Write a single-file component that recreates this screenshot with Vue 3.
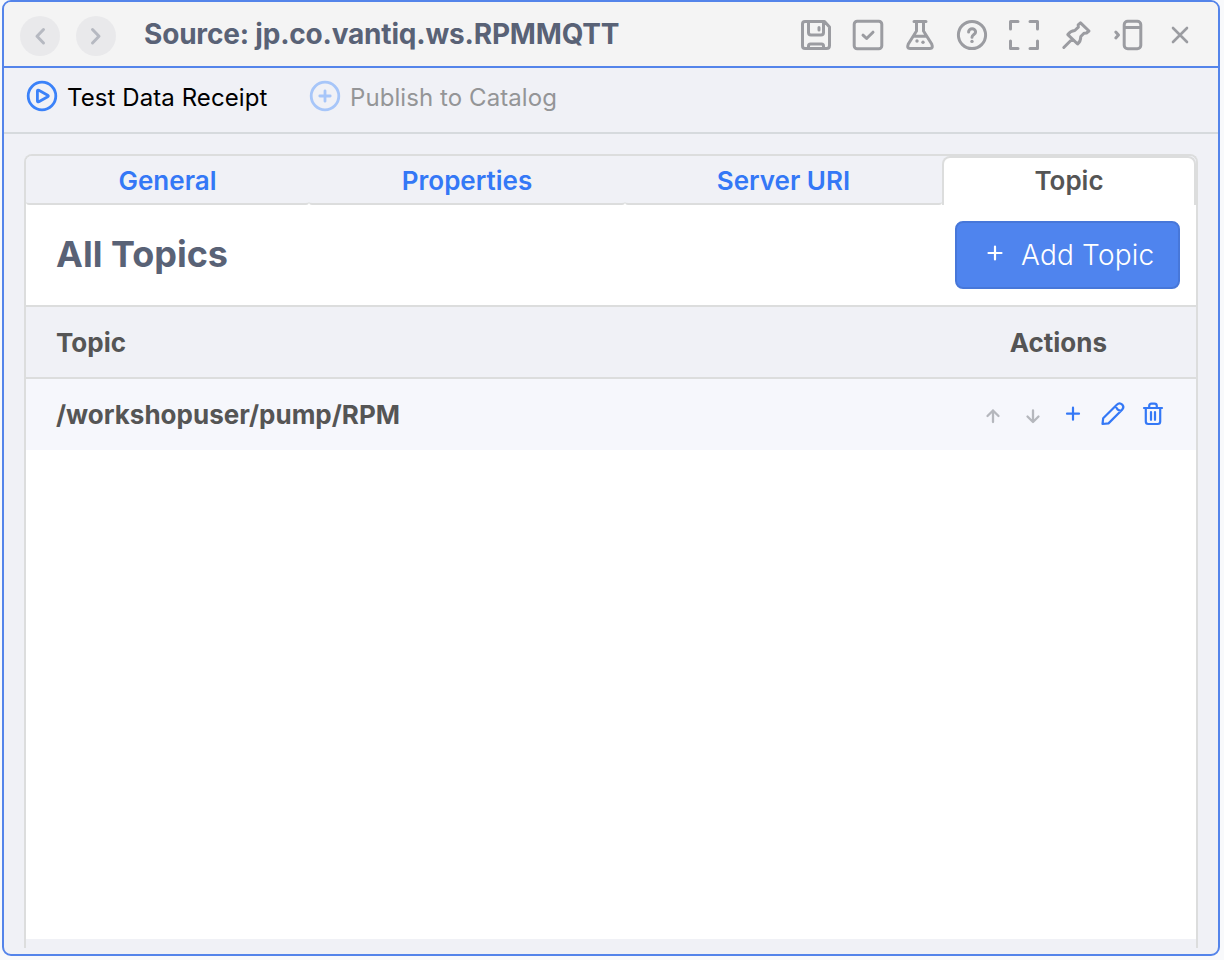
<script setup>
const tabs = [
  { name: 'General', cls: 'general' },
  { name: 'Properties', cls: 'properties' },
  { name: 'Server URI', cls: 'server' },
  { name: 'Topic', cls: 'active' },
]
const topics = ['/workshopuser/pump/RPM']
</script>

<template>
  <div class="window">
    <header class="titlebar">
      <button class="nav"><svg width="40" height="40" viewBox="0 0 40 40"><path d="M23.5 13.5 L17 20.2 L23.5 27" /></svg></button>
      <button class="nav"><svg width="40" height="40" viewBox="0 0 40 40"><path d="M16.5 13.5 L23 20.2 L16.5 27" /></svg></button>
      <h1><span>Source: jp.co.vantiq.ws.RPMMQTT</span></h1>
      <div class="tools">
        <svg viewBox="0 0 32 32"><path d="M5 2.5H24.5L29.5 8V26.5Q29.5 29.5 26.5 29.5H5Q2.5 29.5 2.5 27V5Q2.5 2.5 5 2.5Z M8.5 3V13.5Q8.5 16 11 16H21Q23.5 16 23.5 13.5V3 M8.5 29V27Q8.5 25 10.5 25H21.5Q23.5 25 23.5 27V29 M19 8.5V11" /></svg>
        <svg viewBox="0 0 32 32"><rect x="2.2" y="2.2" width="27.6" height="27.6" rx="3" /><path d="M11 16.2L14.6 19.5L21 13.2" /></svg>
        <svg viewBox="0 0 32 32"><path d="M10 2.5H22 M12.5 3V12L4.3 25Q2.5 29.5 6 29.5H26Q29.5 29.5 27.7 25L19.5 12V3 M9.5 17.3H22.5" /><circle class="dot" cx="13" cy="22" r="1.7" /><circle class="dot" cx="19" cy="23.2" r="1.7" /></svg>
        <svg viewBox="0 0 32 32"><circle cx="16" cy="16" r="13.6" /><path d="M12.6 13C12.6 8.8 19.6 8.8 19.6 13C19.6 15.5 16 15.5 16 18.2" /><circle class="dot" cx="16" cy="22.4" r="1.7" /></svg>
        <svg viewBox="0 0 32 32"><path d="M2.5 10V2.5H10 M22 2.5H29.5V10 M29.5 22V29.5H22 M10 29.5H2.5V22" /></svg>
        <svg viewBox="0 0 32 32"><path d="M20.5 3.8L29 12L26.5 14L24 14.2L20.8 17.5Q20.8 22.5 17.6 25L7.8 15.6Q10.2 12 14.8 11.5L18.3 8.2L18.2 5.8Z M11.8 20.5L3.8 28.5" /></svg>
        <svg viewBox="0 0 32 32"><rect x="12.2" y="2.2" width="16.6" height="27.6" rx="3.5" /><path d="M12.5 8.5H28.5 M3.8 13L6.5 16L3.8 19" /></svg>
        <svg viewBox="0 0 32 32"><path class="thin" d="M9 9L23 23M23 9L9 23" /></svg>
      </div>
    </header>

    <nav class="toolbar">
      <button class="command">
        <svg width="32" height="32" viewBox="0 0 32 32"><circle cx="16" cy="16" r="13.8" /><path d="M11.4 11.1Q11.4 9.6 12.8 10.3L21.7 15.2Q23 16 21.7 16.8L12.8 21.7Q11.4 22.4 11.4 20.9Z" /></svg>
        <span class="t1">Test Data Receipt</span>
      </button>
      <button class="command disabled">
        <svg width="32" height="32" viewBox="0 0 32 32"><circle cx="16" cy="16" r="13.8" /><path d="M16 10.8V21.2M10.8 16H21.2" /></svg>
        <span class="t2">Publish to Catalog</span>
      </button>
    </nav>

    <main class="panel">
      <div class="tabs">
        <div v-for="tab in tabs" :key="tab.name" class="tab" :class="tab.cls"><span>{{ tab.name }}</span></div>
      </div>
      <div class="heading">
        <h2><span>All Topics</span></h2>
        <button class="add">
          <svg width="16" height="16" viewBox="0 0 16 16"><path d="M8 1.5V14.5M1.5 8H14.5" /></svg>
          <span>Add Topic</span>
        </button>
      </div>
      <div class="row thead"><span class="th1">Topic</span><span class="th2">Actions</span></div>
      <div v-for="topic in topics" :key="topic" class="row item">
        <span class="td">{{ topic }}</span>
        <div class="actions">
          <svg class="muted" viewBox="0 0 28 28"><path d="M14 22V10.5M8.5 16L14 10.5L19.5 16" /></svg>
          <svg class="muted" viewBox="0 0 28 28"><path d="M14 10.5V22M8.5 16.5L14 22L19.5 16.5" /></svg>
          <svg class="plus" viewBox="0 0 28 28"><path d="M14 7.7V19.7M8 13.7H20" /></svg>
          <svg viewBox="0 0 28 28"><path d="M3.5 24L4.2 18.2L17.8 4.7Q20.5 2.2 23.2 4.6Q25.6 7.2 23.1 9.8L9.5 23.4Z M16.8 5.8Q17.6 10.6 22.1 10.8" /></svg>
          <svg viewBox="0 0 28 28"><path d="M5 8H23 M6.8 8V21.5Q6.8 24 9.2 24H18.8Q21.2 24 21.2 21.5V8 M10.2 8V6Q10.2 3.7 12.5 3.7H15.5Q17.8 3.7 17.8 6V8 M12 12V19.8 M16 12V19.8" /></svg>
        </div>
      </div>
      <div class="blank"></div>
      <div class="footer"></div>
    </main>
  </div>
</template>

<style>
html, body { margin: 0; background: #f8f9fb; }
#app { height: 960px; overflow: hidden; }
</style>

<style scoped>
* { box-sizing: border-box; }
.window { width: 1218px; height: 956px; margin-left: 2px; border: 2px solid #5484ea; border-radius: 9px; background: #f0f1f6; overflow: hidden; font-family: Inter, "Liberation Sans", sans-serif; display: flex; flex-direction: column; }
button { font: inherit; border: 0; padding: 0; margin: 0; background: none; }
h1, h2 { margin: 0; }
span { white-space: nowrap; }
svg { display: block; flex: none; fill: none; stroke: currentColor; stroke-linecap: round; stroke-linejoin: round; }
.titlebar { height: 66px; flex: none; background: #f4f4f4; border-bottom: 2px solid #5484ea; display: flex; align-items: center; padding: 4px 22px 0 16px; }
.nav { width: 40px; height: 40px; border-radius: 50%; background: #e9e9eb; color: #b6b9c1; margin-right: 16px; }
.nav svg { stroke-width: 3; }
h1 { color: #596276; font-size: 28px; font-weight: 700; letter-spacing: -0.19px; line-height: 36px; margin: -4px 0 0 12px; }
.tools { display: flex; gap: 20px; margin-left: auto; margin-top: -2px; color: #9b9ca1; }
.tools svg { width: 32px; height: 32px; stroke-width: 3; stroke-linecap: round; }
.tools .dot { fill: currentColor; stroke: none; }
.tools .thin { stroke-width: 2.6; }
.toolbar { height: 66px; flex: none; border-bottom: 2px solid #d6dadd; display: flex; align-items: flex-start; padding: 12px 22px; gap: 41px; }
.command { display: flex; align-items: center; gap: 9px; color: #000; font-size: 24px; font-weight: 400; letter-spacing: 0.08px; line-height: 32px; }
.command svg { color: #3b82f9; stroke-width: 2.8; }
.command span { position: relative; top: 2px; }
.command .t1 { width: 201px; text-align: left; }
.disabled { color: #949597; }
.disabled svg { color: #a7c6f9; }
.panel { width: 1174px; height: 794px; margin: 20px 0 0 20px; border: 2px solid #dcdddd; border-bottom: 0; border-radius: 8px 8px 0 0; display: flex; flex-direction: column; }
.tabs { height: 49px; flex: none; display: flex; background: linear-gradient(#f0f1f6 60%, #fff 60%); border-radius: 6px 6px 0 0; }
.tab { border-bottom: 2px solid #dcdddd; background: #f0f1f6; color: #3478f6; font-size: 26px; font-weight: 600; line-height: 50px; text-align: center; border-radius: 6px 6px 3px 3px; }
.general { width: 283px; }
.properties { width: 316px; }
.server { width: 317px; }
.active { width: 254px; background: #fff; color: #555; border: 2px solid #dcdddd; border-bottom: 0; line-height: 46px; border-radius: 8px 8px 0 0; }
.heading { height: 102px; flex: none; background: #fff; border-bottom: 2px solid #dcdddd; display: flex; align-items: center; justify-content: space-between; padding: 0 16px 0 30px; }
h2 { color: #596276; font-size: 36px; font-weight: 700; margin-top: -3px; }
.add { width: 225px; height: 68px; border: 2px solid #4777d9; border-radius: 8px; background: #4f84ee; color: #fff; display: flex; align-items: center; padding-left: 30px; gap: 18px; font-size: 28px; font-weight: 300; letter-spacing: 0.2px; }
.add svg { stroke-width: 2.2; margin-top: -4px; }
.row { display: flex; align-items: center; justify-content: space-between; padding-left: 30px; color: #555; font-size: 26px; font-weight: 700; flex: none; }
.thead { height: 72px; background: #f0f1f6; border-bottom: 2px solid #dcdddd; padding-right: 89px; }
.item { height: 71px; background: #f6f7fc; padding-right: 29px; }
.actions { display: flex; gap: 12px; color: #3478f6; margin-top: -1px; }
.actions svg { width: 28px; height: 28px; stroke-width: 2.2; }
.actions .muted { color: #b5b7bd; stroke-width: 2.3; }
.blank { height: 489px; flex: none; background: #fff; }
.footer { height: 9px; }
</style>
